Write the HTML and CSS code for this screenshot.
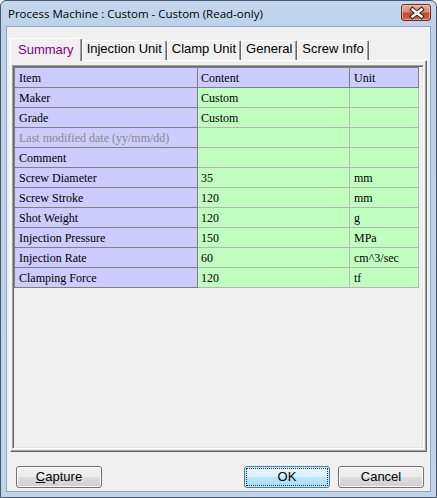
FILE: index.html
```html
<!DOCTYPE html>
<html lang="en">
<head>
    <meta charset="UTF-8">
    <title>Process Machine</title>
    <link rel="stylesheet" href="styles.css">
</head>
<body>
    <div class="window">
        <div class="titlebar">
            <span class="title">Process Machine : Custom - Custom (Read-only)</span>
            <button class="close" type="button" aria-label="Close">
                <svg width="30" height="17" viewBox="0 0 30 17">
                    <path d="M11.5 5.5 L20.5 12.5 M20.5 5.5 L11.5 12.5" stroke="#3a2420" stroke-width="4.6" stroke-linecap="square" fill="none"/>
                    <path d="M11.5 5.5 L20.5 12.5 M20.5 5.5 L11.5 12.5" stroke="#ffffff" stroke-width="2.4" stroke-linecap="square" fill="none"/>
                </svg>
            </button>
        </div>

        <div class="client">
            <div class="tabs">
                <div class="tab active">Summary</div>
                <div class="tab">Injection Unit</div>
                <div class="tab">Clamp Unit</div>
                <div class="tab">General</div>
                <div class="tab">Screw Info</div>
            </div>

            <div class="panel">
                <div class="grid">
                    <table class="props">
                        <tr class="head">
                            <th class="c-item">Item</th>
                            <th class="c-value">Content</th>
                            <th class="c-unit">Unit</th>
                        </tr>
                        <tr><td class="c-item">Maker</td><td class="c-value">Custom</td><td class="c-unit"></td></tr>
                        <tr><td class="c-item">Grade</td><td class="c-value">Custom</td><td class="c-unit"></td></tr>
                        <tr><td class="c-item disabled">Last modified date (yy/mm/dd)</td><td class="c-value"></td><td class="c-unit"></td></tr>
                        <tr><td class="c-item">Comment</td><td class="c-value"></td><td class="c-unit"></td></tr>
                        <tr><td class="c-item">Screw Diameter</td><td class="c-value">35</td><td class="c-unit">mm</td></tr>
                        <tr><td class="c-item">Screw Stroke</td><td class="c-value">120</td><td class="c-unit">mm</td></tr>
                        <tr><td class="c-item">Shot Weight</td><td class="c-value">120</td><td class="c-unit">g</td></tr>
                        <tr><td class="c-item">Injection Pressure</td><td class="c-value">150</td><td class="c-unit">MPa</td></tr>
                        <tr><td class="c-item">Injection Rate</td><td class="c-value">60</td><td class="c-unit">cm^3/sec</td></tr>
                        <tr><td class="c-item">Clamping Force</td><td class="c-value">120</td><td class="c-unit">tf</td></tr>
                    </table>
                </div>
            </div>

            <div class="actions">
                <button class="btn" type="button"><u>C</u>apture</button>
                <span class="spacer"></span>
                <button class="btn default" type="button">OK</button>
                <button class="btn" type="button">Cancel</button>
            </div>
        </div>
    </div>
</body>
</html>
```

FILE: styles.css
```css
* {
    margin: 0;
    padding: 0;
    box-sizing: border-box;
}

body {
    width: 437px;
    height: 498px;
    background: #ffffff;
    overflow: hidden;
}

/* Window frame */
.window {
    width: 437px;
    height: 498px;
    display: flex;
    flex-direction: column;
    border: 1px solid #4b5768;
    border-radius: 6px 6px 0 0;
    background: linear-gradient(#c3d7ee 0, #bcd1ea 30px, #bfd4ec 100%);
}

.titlebar {
    height: 25px;
    display: flex;
    justify-content: space-between;
    align-items: flex-start;
    padding-left: 7px;
}

.title {
    font-family: "Open Sans", "Noto Sans", sans-serif;
    font-size: 11.5px;
    line-height: 15px;
    padding-top: 5px;
    color: #000;
}

.close {
    width: 30px;
    height: 17px;
    margin: 3px 5px 0 0;
    border: 1px solid #6b2a20;
    border-radius: 3px;
    background: linear-gradient(#eaa898 0%, #dd8a78 45%, #c9472f 55%, #d0654c 100%);
    box-shadow: inset 0 0 0 1px rgba(255, 220, 210, 0.5);
    display: flex;
    align-items: center;
    justify-content: center;
}

.close svg {
    display: block;
    margin: -1px;
}

/* Client area */
.client {
    flex: 1;
    margin: 0 5px 5px;
    border: 1px solid #8ea3bf;
    background: #f0f0f0;
    padding: 11px 3px 0;
    display: flex;
    flex-direction: column;
}

/* Tab strip */
.tabs {
    display: flex;
    align-items: flex-start;
    height: 23px;
    font-family: "Liberation Sans", Arial, sans-serif;
    font-size: 13px;
    line-height: 15px;
}

.tab {
    margin-top: 2px;
    padding: 0 4px 4px;
    border-top: 1px solid #ffffff;
    border-left: 1px solid #ffffff;
    border-right: 1px solid #696969;
    border-radius: 2px 2px 0 0;
    box-shadow: inset -1px 0 0 #a0a0a0;
    background: #f0f0f0;
    color: #000;
    white-space: nowrap;
}

.tab.active {
    position: relative;
    z-index: 1;
    margin-top: 0;
    padding: 3px 7px 4px;
    color: #800080;
}

.panel {
    height: 392px;
    margin-top: -1px;
    padding: 4px 2px 2px 1px;
    border-top: 1px solid #ffffff;
    border-left: 1px solid #ffffff;
    border-right: 1px solid #696969;
    border-bottom: 1px solid #696969;
    box-shadow: inset -1px -1px 0 #a0a0a0;
}

/* Property grid */
.grid {
    height: 100%;
    border: 1px solid;
    border-color: #a0a0a0 #ffffff #ffffff #a0a0a0;
    box-shadow: inset 1px 1px 0 #696969, inset -1px -1px 0 #e3e3e3;
    padding: 1px 0 0 1px;
    background: #f0f0f0;
}

.props {
    border-collapse: separate;
    border-spacing: 0;
    table-layout: fixed;
    border-left: 1px solid #808080;
    border-top: 1px solid #808080;
    font-family: "Liberation Serif", "Times New Roman", serif;
    font-size: 12px;
    color: #000;
}

.props th,
.props td {
    height: 20px;
    padding: 2px 3px 0 4px;
    text-align: left;
    font-weight: normal;
    vertical-align: middle;
    white-space: nowrap;
    overflow: hidden;
}

.c-item {
    width: 183px;
}

.c-value {
    width: 152px;
}

.c-unit {
    width: 69px;
}

.props td.c-item,
.props th {
    background: #ccccff;
    border-right: 1px solid #808080;
    border-bottom: 1px solid #808080;
}

.props td.c-value,
.props td.c-unit {
    background: #c0ffc0;
    border-right: 1px solid #b4b4b4;
    border-bottom: 1px solid #b4b4b4;
}

.props .c-value {
    padding-left: 3px;
}

.props td.disabled {
    color: #8a8a8a;
}

/* Dialog buttons */
.actions {
    display: flex;
    margin: 14px 3px 0 6px;
    gap: 8px;
}

.spacer {
    flex: 1;
}

.btn {
    width: 86px;
    height: 22px;
    border: 1px solid #707070;
    border-radius: 3px;
    background: linear-gradient(#f2f2f2 0%, #ebebeb 50%, #dddddd 50%, #cfcfcf 100%);
    box-shadow: inset 0 0 0 1px #fcfcfc;
    font-family: "Liberation Sans", Arial, sans-serif;
    font-size: 13px;
    line-height: 18px;
    color: #000;
}

.btn.default {
    border-color: #3c7fb1;
    background: linear-gradient(#eaf6fd 0%, #d9f0fc 50%, #bee6fd 50%, #a7d9f5 100%);
    box-shadow: inset 0 0 0 1px #c8ebfb;
    outline: 1px dotted #333;
    outline-offset: -3px;
}
```
